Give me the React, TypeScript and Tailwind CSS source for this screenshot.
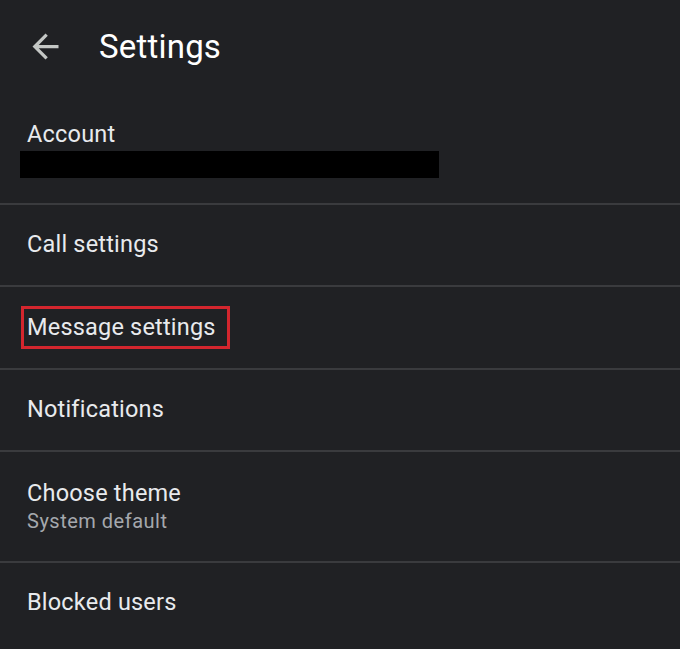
import { ReactNode } from 'react';

const FONT = { fontFamily: 'Roboto, "Liberation Sans", sans-serif' };

function Divider() {
  return <div className="h-[2px] w-full bg-[#3a3b3e]" />;
}

function Row({ children, className = '' }: { children: ReactNode; className?: string }) {
  return <div className={`flex items-center pl-[27px] ${className}`}>{children}</div>;
}

export default function App() {
  return (
    <div className="flex h-[649px] w-[680px] flex-col overflow-hidden bg-[#202124] text-[#e8eaed]" style={FONT}>
      <header className="flex h-[92px] shrink-0 items-center">
        <div className="flex w-[99px] justify-start pl-[26px]">
          <svg viewBox="0 0 24 24" className="h-[39px] w-[39px]" fill="#c4c7c5">
            <path d="M20 11H7.83l5.59-5.59L12 4l-8 8 8 8 1.41-1.41L7.83 13H20v-2z" />
          </svg>
        </div>
        <h1 className="text-[33px] leading-none tracking-[0.2px] text-white">Settings</h1>
      </header>

      <div className="flex h-[111px] shrink-0 flex-col pt-[27px]">
        <span className="pl-[27px] text-[23.5px] leading-[30px] tracking-[0.2px]">Account</span>
        <div className="ml-[20px] mt-[2px] h-[27px] w-[419px] bg-black" />
      </div>
      <Divider />

      <Row className="h-[80px]">
        <span className="text-[23.5px] tracking-[0.2px]">Call settings</span>
      </Row>
      <Divider />

      <Row className="h-[81px]">
        <span className="-ml-[6px] inline-flex h-[43px] items-center border-[3px] border-[#d3262e] pl-[3px] pr-[11px] text-[23.5px] tracking-[0.2px]">
          Message settings
        </span>
      </Row>
      <Divider />

      <Row className="h-[80px]">
        <span className="text-[23.5px] tracking-[0.2px]">Notifications</span>
      </Row>
      <Divider />

      <div className="flex h-[109px] shrink-0 flex-col justify-center pl-[27px] pb-[2px]">
        <span className="text-[23.5px] leading-[30px] tracking-[0.2px]">Choose theme</span>
        <span className="text-[20px] leading-[26px] tracking-[0.5px] text-[#a5a8ad]">System default</span>
      </div>
      <Divider />

      <Row className="h-[80px]">
        <span className="text-[23.5px] tracking-[0.2px]">Blocked users</span>
      </Row>
    </div>
  );
}
